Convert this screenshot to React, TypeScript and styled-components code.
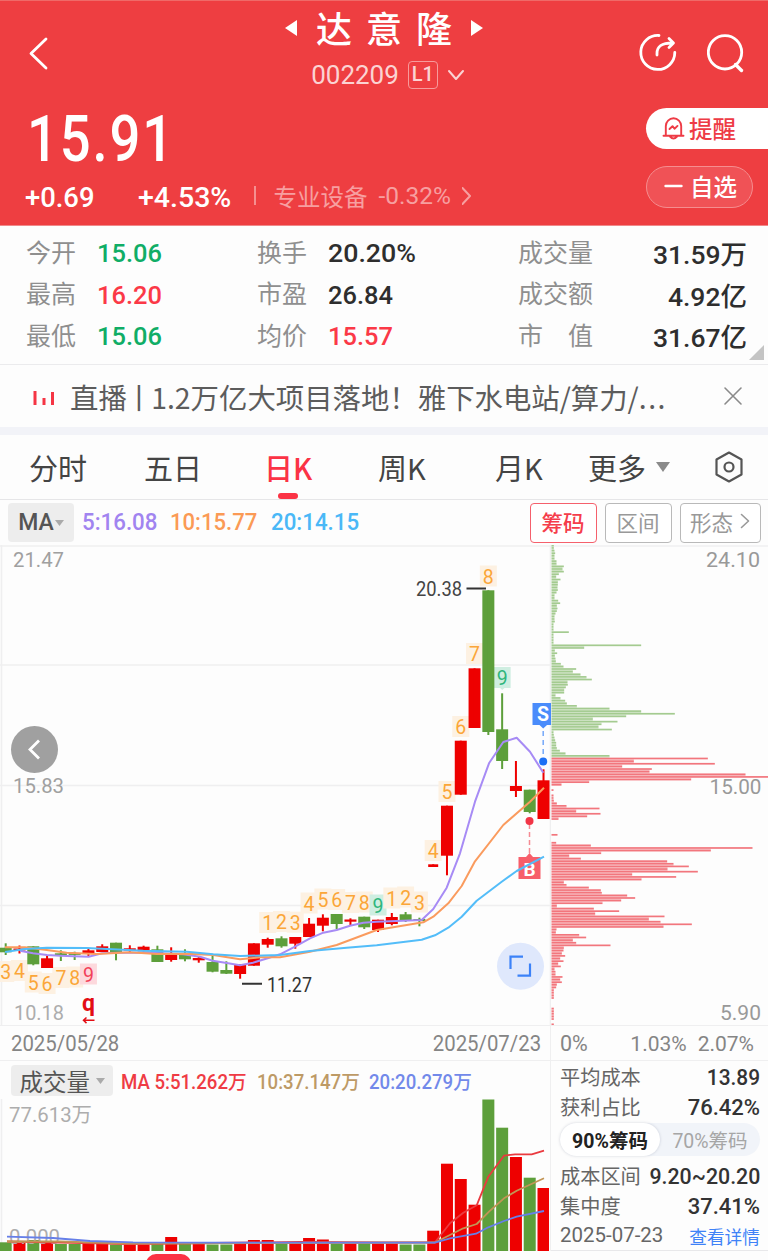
import React from "react";
import styled, { createGlobalStyle } from "styled-components";

const NUM = 'Roboto, "Noto Sans CJK SC", sans-serif';
const RED = "#fb3345";
const UP = "#ee0000";
const DOWN = "#5d9f3b";

const Global = createGlobalStyle`
  * { box-sizing: border-box; }
  body { margin: 0; background: #fdfdfd; font-family: "Noto Sans CJK SC", sans-serif; }
  svg { display: block; }
`;

const Page = styled.main`
  width: 768px;
  height: 1260px;
  overflow: hidden;
  display: flex;
  flex-direction: column;
  background: #fdfdfd;
  color: #333;
`;

/* Numerals drawn slightly condensed from their anchor edge. */
const Num = styled.span<{ $size: number; $sx?: number; $ls?: number; $weight?: number; $from?: string; $color?: string }>`
  display: inline-block;
  white-space: nowrap;
  font-family: ${NUM};
  font-size: ${(p) => p.$size}px;
  font-weight: ${(p) => p.$weight ?? 500};
  letter-spacing: ${(p) => p.$ls ?? 0}px;
  color: ${(p) => p.$color ?? "inherit"};
  transform: scaleX(${(p) => p.$sx ?? 1});
  transform-origin: ${(p) => p.$from ?? "left"} center;
`;

/* ---------- Header ---------- */
const Header = styled.header`
  height: 226px;
  flex: none;
  background: #ee3e41;
  border-top: 1px solid #ef6a68;
  border-bottom: 1px solid #f0898a;
  color: #fff;
`;
const TopBar = styled.div`
  display: grid;
  grid-template-columns: 200px 1fr 200px;
  height: 104px;
`;
const BackSlot = styled.div`
  padding: 36px 0 0 28px;
`;
const TitleBlock = styled.div`
  display: flex;
  flex-direction: column;
  align-items: center;
`;
const TitleRow = styled.div`
  display: flex;
  align-items: center;
  gap: 18px;
  height: 54px;
`;
const Title = styled.h1`
  margin: -2px -14px 0 0;
  font-size: 36px;
  font-weight: 500;
  line-height: 54px;
  letter-spacing: 14px;
`;
const CodeRow = styled.div`
  display: flex;
  align-items: center;
  height: 40px;
  gap: 9px;
  color: #fbd3d3;
  padding-left: 8px;
`;
const LevelTag = styled.span`
  width: 30px;
  height: 28px;
  border: 1.5px solid #f79a9b;
  border-radius: 4px;
  font: 500 20px/25px ${NUM};
  text-align: center;
`;
const TopActions = styled.div`
  display: flex;
  gap: 28px;
  padding: 32px 0 0 71px;
`;
const QuoteRow = styled.div`
  display: flex;
  justify-content: space-between;
`;
const PriceBlock = styled.div`
  padding-left: 25px;
`;
const Price = styled.div`
  height: 67px;
  line-height: 70px;
  padding-left: 2px;
`;
const ChangeRow = styled.div`
  display: flex;
  align-items: center;
  height: 50px;
`;
const ChangeAbs = styled.div`
  width: 113px;
`;
const ChangePct = styled.div`
  width: 116px;
`;
const Divider = styled.i`
  width: 1.5px;
  height: 19px;
  margin: -4px 18px 0 0;
  background: #f58f90;
`;
const Industry = styled.div`
  display: flex;
  align-items: center;
  gap: 11px;
  color: #f79fa0;
  font-size: 23.5px;
  line-height: 34px;
  margin-top: -2px;
`;
const SideActions = styled.div`
  display: flex;
  flex-direction: column;
  align-items: flex-end;
  gap: 17px;
  padding-top: 3px;
`;
const RemindButton = styled.button`
  display: flex;
  align-items: center;
  gap: 4px;
  width: 122px;
  height: 41px;
  padding: 0 0 2px 15px;
  border: 0;
  border-radius: 21px 0 0 21px;
  background: #fff;
  color: #ee3b45;
  font: 500 23.5px "Noto Sans CJK SC", sans-serif;
`;
const WatchButton = styled.button`
  display: flex;
  align-items: center;
  gap: 7px;
  width: 107px;
  height: 42px;
  margin-right: 15px;
  padding: 0 0 2px 17px;
  border: 1.5px solid #f58d8f;
  border-radius: 21px;
  background: #f05256;
  color: #fff;
  font: 500 23.5px "Noto Sans CJK SC", sans-serif;
`;

/* ---------- Key figures ---------- */
const Figures = styled.section`
  position: relative;
  height: 139px;
  flex: none;
  display: grid;
  grid-template-columns: 231px 261px 1fr;
  padding: 6px 21px 0 26px;
  border-bottom: 1.5px solid #ebebed;
`;
const FigureCol = styled.div`
  display: flex;
  flex-direction: column;
`;
const Figure = styled.div<{ $spread?: boolean }>`
  display: flex;
  align-items: center;
  justify-content: ${(p) => (p.$spread ? "space-between" : "flex-start")};
  gap: 21px;
  height: 41.5px;
`;
const FigureLabel = styled.span`
  font-size: 25px;
  line-height: 36px;
  color: #8f8f8f;
  white-space: pre;
  margin-top: -4px;
`;
const Corner = styled.i`
  position: absolute;
  right: 4px;
  bottom: 4px;
  border-left: 15px solid transparent;
  border-bottom: 15px solid #c4c4c4;
`;

/* ---------- News ticker ---------- */
const News = styled.section`
  height: 70px;
  flex: none;
  display: flex;
  align-items: center;
  padding: 0 25px 0 33px;
  border-bottom: 8px solid #f2f3f8;
`;
const NewsBars = styled.svg`
  margin-top: 4px;
`;
const NewsText = styled.p`
  flex: 1;
  margin: 1px 0 0 15px;
  font-size: 28.4px;
  line-height: 42px;
  color: #5c5c5c;
  white-space: nowrap;
  display: flex;
  align-items: center;
`;
const NewsBar = styled.span`
  margin: 0 -2px;
`;
const Ellipsis = styled.span`
  letter-spacing: 1.5px;
`;

/* ---------- Period tabs ---------- */
const Tabs = styled.nav`
  height: 65px;
  flex: none;
  display: flex;
  padding-left: 29px;
  border-bottom: 1.5px solid #e6e6e8;
`;
const Tab = styled.div<{ $w: number; $active?: boolean }>`
  position: relative;
  width: ${(p) => p.$w}px;
  height: 63px;
  display: flex;
  align-items: center;
  gap: 10px;
  font-size: 29px;
  line-height: 42px;
  color: ${(p) => (p.$active ? RED : "#444")};
  font-weight: ${(p) => (p.$active ? 500 : 400)};
`;
const TabMark = styled.i`
  position: absolute;
  left: 14px;
  bottom: -1px;
  width: 20px;
  height: 6px;
  border-radius: 3px;
  background: ${RED};
`;

/* ---------- Indicator bar ---------- */
const IndicatorBar = styled.div`
  height: 45px;
  flex: none;
  display: flex;
  align-items: center;
  padding: 0 7.5px 0 8px;
`;
const Picker = styled.span<{ $w: number; $h: number }>`
  display: flex;
  align-items: center;
  justify-content: center;
  gap: 1px;
  width: ${(p) => p.$w}px;
  height: ${(p) => p.$h}px;
  border-radius: 4px;
  background: #ededed;
  color: #555;
`;
const AvgList = styled.div`
  flex: 1;
  display: flex;
  padding-left: 8px;
`;
const AvgItem = styled.span<{ $w: number }>`
  width: ${(p) => p.$w}px;
`;
const ToolButton = styled.button<{ $w: number; $active?: boolean }>`
  width: ${(p) => p.$w}px;
  height: 40px;
  margin-left: 8px;
  padding: 0 0 3px;
  display: flex;
  align-items: center;
  justify-content: center;
  gap: 7px;
  border: 1.5px solid ${(p) => (p.$active ? "#f5606c" : "#b9b9b9")};
  border-radius: 4px;
  background: #fff;
  color: ${(p) => (p.$active ? "#f53d4b" : "#999")};
  font: ${(p) => (p.$active ? 500 : 400)} 21.5px "Noto Sans CJK SC", sans-serif;
`;

/* ---------- Charts ---------- */
const Charts = styled.section`
  display: grid;
  grid-template-columns: 551px 217px;
  grid-template-rows: 480px 36px 190px;
  flex: none;
`;
const DateRow = styled.div`
  display: flex;
  justify-content: space-between;
  align-items: center;
  padding: 1px 9px 0 11px;
  border: 1.5px solid #efeff0;
  border-width: 1.5px 1.5px 1.5px 0;
  color: #858585;
`;
const ScaleRow = styled(DateRow)`
  padding: 1px 14px 0 9px;
  border-right: 0;
`;
const ScaleEnds = styled.div`
  display: flex;
  gap: 11px;
`;
const VolumePanel = styled.div`
  display: flex;
  flex-direction: column;
  border-right: 1.5px solid #efeff0;
`;
const VolumeBar = styled.div`
  height: 38px;
  display: flex;
  align-items: center;
  padding: 1px 0 0 11px;
`;
const CostPanel = styled.div`
  padding: 2px 8px 0 9px;
  border-bottom: 1.5px solid #e8e8ea;
`;
const CostRow = styled.div<{ $h: number }>`
  display: flex;
  align-items: center;
  justify-content: space-between;
  height: ${(p) => p.$h}px;
  font-size: 20.2px;
  line-height: 28px;
  color: #666;
  white-space: nowrap;
`;
const CostLabel = styled.span`
  margin-top: -2px;
`;
const Segment = styled.div`
  display: flex;
  height: 33px;
  margin-bottom: 5px;
  border-radius: 17px;
  background: #f1f4f9;
`;
const SegmentItem = styled.span<{ $on?: boolean }>`
  flex: 1;
  display: flex;
  align-items: center;
  justify-content: center;
  padding-bottom: 1px;
  border-radius: 17px;
  white-space: nowrap;
  font: ${(p) => (p.$on ? 700 : 400)} 19.5px ${NUM};
  color: ${(p) => (p.$on ? "#222" : "#a6a6a6")};
  background: ${(p) => (p.$on ? "#fff" : "transparent")};
  box-shadow: ${(p) => (p.$on ? "0 0 3px rgba(60,70,100,.22)" : "none")};
`;
const DetailLink = styled.a`
  font-size: 17.7px;
  color: #3f82f7;
`;
const Footer = styled.footer`
  flex: 1;
  padding: 3px 0 0 146px;
`;
const FooterPill = styled.i`
  display: block;
  width: 45px;
  height: 20px;
  border-radius: 14px;
  background: ${RED};
`;

/* ---------- Chart data: [colour, body top, body bottom, wick top, wick bottom] ---------- */
type Candle = [0 | 1, number, number, number, number];
const candles: Candle[] = [
  [0, 947.7, 952.3, 943.3, 955], [1, 948.5, 950.5, 945.5, 953.5], [0, 946.3, 964.3, 946.3, 965.3], [1, 958.3, 968, 955.3, 968],
  [0, 953.3, 955.2, 950.3, 961], [0, 953, 954.9, 951.7, 960], [1, 950.3, 953, 949, 956.7], [1, 946.3, 952, 944.3, 952],
  [0, 942.7, 952, 942.7, 960.3], [1, 948.3, 950.5, 945.3, 952.7], [1, 946.7, 951.3, 945.7, 951.3], [0, 949.3, 962, 945.7, 962],
  [1, 954, 960, 947.3, 961.7], [0, 955, 959.3, 949.3, 961.3], [1, 958, 960.3, 956, 962.7], [0, 962, 971.7, 955.3, 972.3],
  [0, 970, 973.7, 961.3, 974], [1, 964.3, 974, 964.3, 978.7], [1, 943.3, 965.7, 943.3, 965.7], [1, 939, 944.7, 937.7, 947.7],
  [0, 938.3, 946.3, 936.3, 947.7], [1, 937, 943.7, 937, 948.7], [1, 923.7, 937, 918, 937], [1, 917.7, 925.7, 914.3, 931.3],
  [0, 914, 924, 914, 929], [1, 919.5, 921.7, 918.3, 925.3], [0, 916.7, 927.3, 916.7, 929], [1, 919.7, 930, 919.7, 932],
  [1, 917, 924, 913, 925.3], [0, 914.3, 920.7, 912, 922], [0, 919, 921, 917.7, 926.3], [1, 864.3, 867, 864.3, 867],
  [1, 805.7, 855.7, 805.7, 875.3], [1, 740.7, 794.7, 740.7, 794.7], [1, 668.3, 728, 668.3, 728], [0, 590.3, 732, 590.3, 735],
  [0, 729.3, 761, 693.3, 769], [1, 786, 791, 761, 797], [0, 789.7, 812, 789.7, 813.3], [1, 780.3, 819, 769.3, 819],
];
const cx = (i: number) => 5.7 + 13.79 * i;

const volumeTops = [
  1242.3, 1243, 1240, 1242, 1244, 1244, 1244, 1244, 1244.5, 1244.5, 1244.5, 1244, 1237, 1244, 1244, 1244.5, 1244.5, 1243, 1240, 1240,
  1244, 1243.5, 1238, 1239.5, 1243.5, 1243.5, 1243.5, 1243.5, 1243.5, 1244.5, 1244.5, 1230.7, 1163.7, 1179, 1204.7, 1099.5, 1127.7, 1157, 1177.7, 1188,
];

/* Sequence counters: [candle index, digit, centre y, tone] */
const tones = {
  o: ["#fdf1e2", "#fba638"],
  r: ["#fdd9dd", "#f2415a"],
  g: ["#cfeee1", "#2fb67c"],
};
const counters: [number, string, number, keyof typeof tones][] = [
  [0, "3", 972, "o"], [1, "4", 971, "o"], [2, "5", 982.5, "o"], [3, "6", 984, "o"], [4, "7", 978, "o"], [5, "8", 977.5, "o"], [6, "9", 974.5, "r"],
  [19, "1", 923, "o"], [20, "2", 922, "o"], [21, "3", 922.7, "o"], [22, "4", 903.5, "o"], [23, "5", 899.5, "o"], [24, "6", 900, "o"],
  [25, "7", 903, "o"], [26, "8", 902.5, "o"], [27, "9", 905.5, "g"], [28, "1", 898.5, "o"], [29, "2", 897.5, "o"], [30, "3", 902.5, "o"],
  [31, "4", 851, "o"], [32, "5", 792, "o"], [33, "6", 727, "o"], [34, "7", 654, "o"], [35, "8", 576.5, "o"], [36, "9", 678, "g"],
];

const ma5 = "20,950.7 33,953.3 47,955 60,955.7 88.7,956.7 102,953.3 116,952.7 150,952.7 183,954.3 200,956.7 212.7,960.7 226.7,963 240,965.3 253,962.7 267.7,958.3 280,954.3 295,946.7 310,938.3 323.3,932.7 336.7,930 350,925.7 363.3,922.7 376.7,921.7 390,921.3 421.7,920 433.3,909 446.7,887.7 460,853.3 475,801.7 489,763.3 503.3,742 516.7,737.7 530,751.7 543.3,772.7";
const ma10 = "5,947.3 25,947.3 46.7,950 66.7,952.7 96.7,954 130,952.3 156.7,954 186.7,953.7 213.3,955 240,959.3 260,957.3 280,957.3 310,951.7 336.7,945 376.7,930 423.3,922.3 433.3,916.7 448.3,903.3 461.7,886 475,861.3 503.3,825 530,801.7 544,787.7";
const ma20 = "5,952 25,949 46.7,947.7 86.7,948 143.3,950.7 186.7,951.7 213.3,954.3 240,956 280,955 310,951 346.7,947.7 376.7,945.3 421.7,939.7 435,935.3 448.3,927.7 461.7,916.7 476.7,900.7 501.7,881.7 516.7,871 544,856.7";

/* Chip distribution lengths from top to bottom, in thirds of a pixel */
const chips = [
  7, 7, 9, 11, 9, 9, 15, 15, 37, 33, 37, 22, 14, 27, 19, 19, 18, 19, 15, 9, 9, 20, 26, 16, 18, 16, 12, 9, 9, 10, 6, 6, 6, 52, 6, 6, 6, 6, 269, 98,
  10, 17, 10, 12, 13, 28, 36, 74, 64, 87, 105, 121, 48, 49, 43, 38, 38, 12, 27, 41, 46, 76, 174, 269, 370, 224, 124, 198, 150, 141, 181, 6, 7, 9, 11, 14, 14, 16, 25, 42,
  174, 469, 247, 490, 212, 301, 294, 582, 650, 419, 113, 30, 0, 6, 0, 6, 6, 7, 16, 45, 144, 74, 147, 107, 21, 0, 0, 0, 0, 0, 18, 0, 0, 14, 118, 603, 478, 149, 53, 88,
  347, 366, 412, 348, 439, 242, 374, 270, 37, 45, 112, 148, 151, 227, 251, 209, 153, 16, 127, 203, 131, 339, 292, 327, 421, 336, 15, 13, 83, 104, 64, 74, 177, 37, 36, 31, 41, 26, 36, 20,
  28, 9, 12, 12, 33, 26, 31, 16, 14, 7, 7, 7, 7, 0, 0, 0, 7, 7, 7, 7, 7, 0, 7,
];

const AxisText = ({ x, y, w, children, anchor = "start", size = 21, fill = "#999", weight = 400 }: { x: number; y: number; w: number; children: string; anchor?: "start" | "end"; size?: number; fill?: string; weight?: number }) => (
  <text x={anchor === "end" ? x - w : x} y={y} textLength={w} lengthAdjust="spacingAndGlyphs" fontFamily={NUM} fontSize={size} fontWeight={weight} fill={fill}>
    {children}
  </text>
);

const Chevron = ({ w, h, d, color, sw = 2 }: { w: number; h: number; d: string; color: string; sw?: number }) => (
  <svg width={w} height={h} viewBox={`0 0 ${w} ${h}`} fill="none" stroke={color} strokeWidth={sw} strokeLinecap="round" strokeLinejoin="round">
    <path d={d} />
  </svg>
);
const Caret = ({ w, h, color }: { w: number; h: number; color: string }) => (
  <svg width={w} height={h} viewBox="0 0 10 8" preserveAspectRatio="none"><path d="M0 0H10L5 8Z" fill={color} /></svg>
);

const PriceChart = () => (
  <svg width="551" height="480" viewBox="0 545 551 480">
    <g stroke="#efeff0" strokeWidth="1.5">
      <path d="M0 546H551M0 665H551M0 785.5H551M0 905.5H551M1.5 545V1025M550.5 545V1025" />
    </g>
    {counters.map(([i, , y, t]) => (
      <rect key={i} x={cx(i) - 8.5} y={y - 11} width="17" height="21" fill={tones[t][0]} />
    ))}
    <path d="M499 687l3.300 3 3.300-3z" fill="#cfeee1" />
    {counters.map(([i, n, y, t]) => (
      <text key={i} x={cx(i)} y={y + 7} textAnchor="middle" fontFamily={NUM} fontSize="19.500" fill={tones[t][1]}>{n}</text>
    ))}
    {candles.map(([up, a, b, c, d], i) => (
      <g key={i} fill={up ? UP : DOWN}>
        <rect x={cx(i) - (i === 31 ? 5 : 6)} y={a} width={i === 31 ? 10 : 12} height={b - a} />
        <rect x={cx(i) - 1} y={c} width="2" height={d - c} />
      </g>
    ))}
    <AxisText x={13} y={567} w={51} fill="#a0a0a0">21.47</AxisText>
    <AxisText x={13} y={793} w={51} fill="#a0a0a0">15.83</AxisText>
    <AxisText x={14} y={1019.5} w={50} fill="#adadad">10.18</AxisText>
    <AxisText x={416} y={596} w={46} size={19.5} fill="#444">20.38</AxisText>
    <AxisText x={267} y={991.5} w={45} size={19.5} fill="#333">11.27</AxisText>
    <path d="M466.500 588.500H486M242 983.700H262" stroke="#333" strokeWidth="2" />
    <text x="88.500" y="1010.500" textAnchor="middle" fontFamily={NUM} fontSize="23" fontWeight="700" fill="#e30d14">q</text>
    <path d="M94.500 1020.300H83.500M86.500 1017.500l-3 2.800 3 2.800" fill="none" stroke="#e30d14" strokeWidth="1.500" />
    <path d="M529.500 824V856" stroke="#f58b93" strokeWidth="1.500" strokeDasharray="5 3" />
    <path d="M518.500 857H526l3.500-4 3.500 4h7.500v22h-22z" fill="#f75e6a" />
    <text x="529.500" y="875.500" textAnchor="middle" fontFamily={NUM} fontSize="19" fontWeight="700" fill="#fff">B</text>
    <g fill="none" strokeWidth="2" strokeLinejoin="round">
      <polyline points={ma5} stroke="#a78bf5" />
      <polyline points={ma10} stroke="#fa9b5e" />
      <polyline points={ma20} stroke="#53bdf9" />
    </g>
    <circle cx="529.500" cy="821" r="4" fill="#f23546" />
    <path d="M543.200 731V757" stroke="#75a8fa" strokeWidth="1.500" strokeDasharray="5 4" />
    <circle cx="543.200" cy="761.500" r="4" fill="#1d70f5" />
    <path d="M532.500 703H551v22h-4l-3.800 3.500-3.700-3.500h-7z" fill="#4a8cfb" />
    <text x="543" y="721" textAnchor="middle" fontFamily={NUM} fontSize="19.500" fontWeight="700" fill="#fff">S</text>
    <circle cx="34.500" cy="749.500" r="23.500" fill="#a0a0a0" />
    <path d="M39 740.500l-9 9 9 9" fill="none" stroke="#fff" strokeWidth="2.800" />
    <circle cx="520.500" cy="966.300" r="23.500" fill="#dfe8fc" />
    <path d="M510.500 969V956.700H523M530 963.500V975.700H517.500" fill="none" stroke="#3c82f8" strokeWidth="2.200" />
  </svg>
);

const ChipChart = () => (
  <svg width="217" height="480" viewBox="551 545 217 480">
    <path d="M551 546H768" stroke="#efeff0" strokeWidth="1.500" />
    {chips.map((n, k) => {
      const next = chips[k + 1] ?? 0;
      const y = 545.3 + 2.632 * k;
      const color = k < 81 ? "#a4cb90" : "#f2767d";
      return (
        <g key={k} fill={color}>
          <rect x="551.500" y={y - 0.85} width={n / 3} height="1.700" />
          <rect x="551.500" y={y + 0.85} width={Math.min(n, next) / 3} height="0.940" opacity="0.550" />
        </g>
      );
    })}
    <AxisText x={760} y={567} w={54} anchor="end">24.10</AxisText>
    <AxisText x={761.5} y={794} w={52} anchor="end">15.00</AxisText>
    <AxisText x={761} y={1020} w={41} anchor="end">5.90</AxisText>
  </svg>
);

const VolumeChart = () => (
  <svg width="549" height="152" viewBox="0 1099 549 152">
    <path d="M1.500 1099V1251" stroke="#efeff0" strokeWidth="1.500" />
    <AxisText x={9} y={1122} w={83} size={20} fill="#adadad">77.613万</AxisText>
    {volumeTops.map((t, i) => (
      <rect key={i} x={cx(i) - 6} y={t} width="12" height={1251 - t} fill={candles[i][0] ? UP : DOWN} />
    ))}
    <AxisText x={9} y={1243.5} w={51} size={20} fill="#adadad">0.000</AxisText>
    <g fill="none" strokeWidth="1.800" strokeLinejoin="round">
      <polyline stroke="#ea3a3f" points="7,1241.500 60,1242.500 130,1244 300,1242 380,1242.500 435,1242.300 450,1223.300 463.300,1212.700 476.700,1205.300 488.300,1176.700 504,1155.700 515,1154.300 531.700,1154.300 544,1150.700" />
      <polyline stroke="#c29555" points="7,1241.500 60,1241.500 130,1243.700 300,1243 435,1242.500 463.300,1228.300 476.700,1224 489,1211.700 504,1198.300 516.700,1190.700 544,1178.300" />
      <polyline stroke="#667fe8" points="7,1236.700 53,1238 90,1241 133,1242.300 200,1242.600 435,1242.600 450,1238.300 476,1233.700 488.300,1227.300 504,1221 516.700,1216.700 544,1211" />
    </g>
  </svg>
);

const figureRows: { label: string; value: string; color?: string; sx?: number }[][] = [
  [{ label: "今开", value: "15.06", color: "#10ad66" }, { label: "最高", value: "16.20", color: "#fb3947" }, { label: "最低", value: "15.06", color: "#10ad66" }],
  [{ label: "换手", value: "20.20%", sx: 1.01 }, { label: "市盈", value: "26.84" }, { label: "均价", value: "15.57", color: "#fb3947" }],
  [{ label: "成交量", value: "31.59万", sx: 1 }, { label: "成交额", value: "4.92亿", sx: 1 }, { label: "市　值", value: "31.67亿", sx: 1 }],
];

export default function App() {
  return (
    <Page>
      <Global />
      <Header>
        <TopBar>
          <BackSlot><Chevron w={22} h={34} d="M18 2L3 16.500L18 31" color="#fff" sw={2.8} /></BackSlot>
          <TitleBlock>
            <TitleRow>
              <svg width="14" height="18" viewBox="0 0 14 18"><path d="M13 1V17L1 9Z" fill="#fff" /></svg>
              <Title>达意隆</Title>
              <svg width="14" height="18" viewBox="0 0 14 18"><path d="M1 1V17L13 9Z" fill="#fff" /></svg>
            </TitleRow>
            <CodeRow>
              <Num $size={26} $weight={400}>002209</Num>
              <LevelTag>L1</LevelTag>
              <Chevron w={18} h={12} d="M2 2L9 10L16 2" color="#fbd3d3" sw={2} />
            </CodeRow>
          </TitleBlock>
          <TopActions>
            <svg width="40" height="40" viewBox="0 0 40 40" fill="none" stroke="#fff" strokeWidth="2.800" strokeLinecap="round" strokeLinejoin="round">
              <path d="M20 2.500A17 17 0 1 0 35.800 19.500" />
              <path d="M18 22V20.500C18 13.500 22 10 33.500 10M30 5.500L34.500 10L30 14.500" />
            </svg>
            <svg width="40" height="42" viewBox="0 0 40 42" fill="none" stroke="#fff" strokeWidth="2.800" strokeLinecap="round">
              <circle cx="18" cy="19.300" r="16.700" /><path d="M28.500 31.500L34.500 37.500" strokeWidth="3.400" />
            </svg>
          </TopActions>
        </TopBar>
        <QuoteRow>
          <PriceBlock>
            <Price><Num $size={64} $sx={0.85} $ls={2.2}>15.91</Num></Price>
            <ChangeRow>
              <ChangeAbs><Num $size={28.5} $sx={0.96}>+0.69</Num></ChangeAbs>
              <ChangePct><Num $size={28.5}>+4.53%</Num></ChangePct>
              <Divider />
              <Industry>
                专业设备
                <Num $size={24.5} $weight={400}>-0.32%</Num>
                <Chevron w={12} h={20} d="M0.500 2L8 10L0.500 18" color="#f79fa0" />
              </Industry>
            </ChangeRow>
          </PriceBlock>
          <SideActions>
            <RemindButton>
              <svg width="24" height="26" viewBox="0 0 24 26" fill="none" stroke="#ee3b45" strokeWidth="1.900" strokeLinecap="round" strokeLinejoin="round">
                <path d="M2.500 20.700H22.500M4.800 20.500V11A7.700 7.700 0 0 1 20.200 11V20.500M9 21.500Q12.500 25.500 16 21.500M8.500 14l3-2.800 2 2.500 3-2.800" />
              </svg>
              提醒
            </RemindButton>
            <WatchButton>
              <Chevron w={19} h={4} d="M1.500 2H17.500" color="#fff" sw={2.4} />
              自选
            </WatchButton>
          </SideActions>
        </QuoteRow>
      </Header>

      <Figures>
        {figureRows.map((col, c) => (
          <FigureCol key={c}>
            {col.map((f) => (
              <Figure key={f.label} $spread={c === 2}>
                <FigureLabel>{f.label}</FigureLabel>
                <Num $size={26.5} $sx={f.sx ?? 0.96} $from={c === 2 ? "right" : "left"} $color={f.color ?? "#2e2e2e"}>{f.value}</Num>
              </Figure>
            ))}
          </FigureCol>
        ))}
        <Corner />
      </Figures>

      <News>
        <NewsBars width="22" height="16" viewBox="0 0 22 16" stroke="#f53544" strokeWidth="3"><path d="M2 1V15M11 8V15M19.500 2V15" /></NewsBars>
        <NewsText>直播<NewsBar>丨</NewsBar>1.2万亿大项目落地！雅下水电站/算力/<Ellipsis>...</Ellipsis></NewsText>
        <Chevron w={20} h={20} d="M2 2L18 18M18 2L2 18" color="#8a8a8a" sw={1.6} />
      </News>

      <Tabs>
        <Tab $w={115}>分时</Tab>
        <Tab $w={120}>五日</Tab>
        <Tab $w={114} $active>日K<TabMark /></Tab>
        <Tab $w={117}>周K</Tab>
        <Tab $w={93}>月K</Tab>
        <Tab $w={127}>更多<Caret w={14} h={10} color="#8a8a8a" /></Tab>
        <Tab $w={40}>
          <svg width="28" height="32" viewBox="0 0 28 32" fill="none" stroke="#555" strokeWidth="2.200" strokeLinejoin="round">
            <path d="M14 1.500L26.500 8.500V23.500L14 30.500L1.500 23.500V8.500Z" /><circle cx="14" cy="16" r="4.500" />
          </svg>
        </Tab>
      </Tabs>

      <IndicatorBar>
        <Picker $w={66} $h={39}><Num $size={23}>MA</Num><Caret w={9} h={6} color="#aaa" /></Picker>
        <AvgList>
          <AvgItem $w={88}><Num $size={23} $sx={0.97} $color="#a184f0">5:16.08</Num></AvgItem>
          <AvgItem $w={101}><Num $size={23} $sx={0.96} $color="#fb9a55">10:15.77</Num></AvgItem>
          <AvgItem $w={100}><Num $size={23} $sx={0.97} $color="#4ab8f7">20:14.15</Num></AvgItem>
        </AvgList>
        <ToolButton $w={67} $active>筹码</ToolButton>
        <ToolButton $w={67}>区间</ToolButton>
        <ToolButton $w={81}>形态<Chevron w={10} h={16} d="M1.500 1.500L8.500 8L1.500 14.500" color="#999" sw={1.6} /></ToolButton>
      </IndicatorBar>

      <Charts>
        <PriceChart />
        <ChipChart />
        <DateRow>
          <Num $size={22} $sx={0.925} $weight={400}>2025/05/28</Num>
          <Num $size={22} $sx={0.925} $weight={400} $from="right">2025/07/23</Num>
        </DateRow>
        <ScaleRow>
          <Num $size={21.5} $weight={400}>0%</Num>
          <ScaleEnds>
            <Num $size={21} $weight={400}>1.03%</Num>
            <Num $size={21} $weight={400}>2.07%</Num>
          </ScaleEnds>
        </ScaleRow>
        <VolumePanel>
          <VolumeBar>
            <Picker $w={102} $h={31}>
              <Num $size={23.5} $weight={400}>成交量</Num>&nbsp;<Caret w={9} h={6} color="#aaa" />
            </Picker>
            <AvgList>
              <AvgItem $w={136}><Num $size={19.5} $sx={0.955} $color="#ef3b44">MA 5:51.262万</Num></AvgItem>
              <AvgItem $w={112}><Num $size={19.5} $sx={0.955} $color="#bd9a66">10:37.147万</Num></AvgItem>
              <AvgItem $w={110}><Num $size={19.5} $sx={0.955} $color="#7289ea">20:20.279万</Num></AvgItem>
            </AvgList>
          </VolumeBar>
          <VolumeChart />
        </VolumePanel>
        <CostPanel>
          <CostRow $h={29}><CostLabel>平均成本</CostLabel><Num $size={22} $color="#333" $from="right" $sx={0.95}>13.89</Num></CostRow>
          <CostRow $h={31}><CostLabel>获利占比</CostLabel><Num $size={22} $color="#333" $from="right">76.42%</Num></CostRow>
          <Segment>
            <SegmentItem $on>90%筹码</SegmentItem>
            <SegmentItem>70%筹码</SegmentItem>
          </Segment>
          <CostRow $h={31}><CostLabel>成本区间</CostLabel><Num $size={22} $color="#333" $from="right" $sx={0.97}>9.20~20.20</Num></CostRow>
          <CostRow $h={29}><CostLabel>集中度</CostLabel><Num $size={22} $color="#333" $from="right">37.41%</Num></CostRow>
          <CostRow $h={29}><Num $size={19.5} $sx={1.05} $weight={400}>2025-07-23</Num><DetailLink>查看详情</DetailLink></CostRow>
        </CostPanel>
      </Charts>
      <Footer><FooterPill /></Footer>
    </Page>
  );
}
